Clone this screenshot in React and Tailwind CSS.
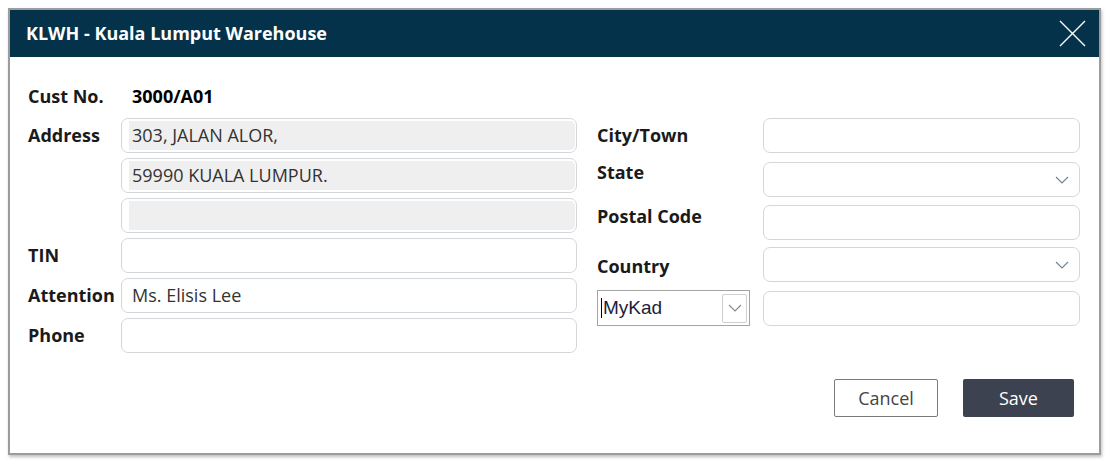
import React from "react";

const font = { fontFamily: '"Open Sans", "Noto Sans", sans-serif' };

function Chevron({ className = "" }) {
  return (
    <svg width="14" height="8" viewBox="0 0 14 8" className={className}>
      <path d="M1 1 L7 7 L13 1" fill="none" stroke="currentColor" strokeWidth="1.1" />
    </svg>
  );
}

function Field({ value = "", filled = false, select = false }) {
  return (
    <div
      className={`h-[35px] w-full rounded-[7px] border border-[#d4d7da] flex items-center bg-white ${
        filled ? "pl-[7px] pr-[1px] py-[2px]" : ""
      }`}
    >
      {filled ? (
        <div className="h-full w-full bg-[#efefef] rounded-r-[5px] flex items-center pl-[3px] text-[18px] text-[#333]">
          {value}
        </div>
      ) : (
        <div className="flex-1 pl-[10px] text-[18px] text-[#333]">{value}</div>
      )}
      {select && <Chevron className="mr-[10px] text-[#70808e]" />}
    </div>
  );
}

function Row({ label, children }) {
  return (
    <div className="flex items-center">
      <div className="w-[93px] shrink-0 text-[18px] font-bold text-[#1a1a1a]">{label}</div>
      <div className="flex-1">{children}</div>
    </div>
  );
}

export default function App() {
  return (
    <div className="w-[1114px] h-[464px] bg-white pt-[8px] pl-[8px]" style={font}>
      <div className="w-[1093px] h-[447px] border-2 border-[#9c9c9c] shadow-[1px_2px_3px_rgba(0,0,0,0.25)] bg-white flex flex-col">
        {/* Header */}
        <div className="h-[47px] bg-[#04324a] flex items-center justify-between pl-[16px] pr-[13px]">
          <span className="text-white text-[18px] font-bold">KLWH - Kuala Lumput Warehouse</span>
          <svg width="27" height="27" viewBox="0 0 27 27">
            <path d="M1 1 L26 26 M26 1 L1 26" stroke="#ffffff" strokeWidth="1.4" />
          </svg>
        </div>

        {/* Body */}
        <div className="flex-1 pt-[27px] pl-[18px] pr-[19px] flex flex-col">
          <div className="flex gap-[20px]">
            {/* Left column */}
            <div className="w-[549px] flex flex-col">
              <div className="h-[24px] flex items-center">
                <div className="w-[104px] text-[18px] font-bold text-[#1a1a1a]">Cust No.</div>
                <div className="text-[18px] font-bold text-black">3000/A01</div>
              </div>
              <div className="mt-[10px] flex flex-col gap-[5px]">
                <div className="flex items-start">
                  <div className="w-[93px] shrink-0 h-[35px] flex items-center text-[18px] font-bold text-[#1a1a1a]">
                    Address
                  </div>
                  <div className="flex-1 flex flex-col gap-[5px]">
                    <Field filled value="303, JALAN ALOR," />
                    <Field filled value="59990 KUALA LUMPUR." />
                    <Field filled value="" />
                  </div>
                </div>
                <Row label="TIN">
                  <Field />
                </Row>
                <Row label="Attention">
                  <Field value="Ms. Elisis Lee" />
                </Row>
                <Row label="Phone">
                  <Field />
                </Row>
              </div>
            </div>

            {/* Right column */}
            <div className="flex-1 pt-[34px] flex flex-col">
              <div className="flex items-center">
                <div className="w-[166px] shrink-0 text-[18px] font-bold text-[#1a1a1a]">City/Town</div>
                <Field />
              </div>
              <div className="flex items-start mt-[9px]">
                <div className="w-[166px] shrink-0 text-[18px] font-bold text-[#1a1a1a] leading-[20px]">State</div>
                <Field select />
              </div>
              <div className="flex items-start mt-[8px]">
                <div className="w-[166px] shrink-0 text-[18px] font-bold text-[#1a1a1a] leading-[22px]">Postal Code</div>
                <Field />
              </div>
              <div className="flex items-center mt-[7px]">
                <div className="w-[166px] shrink-0 text-[18px] font-bold text-[#1a1a1a] pt-[4px]">Country</div>
                <Field select />
              </div>
              <div className="flex items-center mt-[8px]">
                <div className="w-[166px] shrink-0">
                  <div className="w-[153px] h-[36px] border border-[#a3a3a3] flex items-center justify-between pl-[3px] pr-[2px]">
                    <div className="flex items-center">
                      <span className="w-[1px] h-[20px] bg-black mr-[1px]" />
                      <span
                        className="text-[19px] text-[#1c1c3c]"
                        style={{ fontFamily: '"Liberation Sans", Arial, sans-serif' }}
                      >
                        MyKad
                      </span>
                    </div>
                    <div className="w-[25px] h-[29px] border border-[#cfcfcf] rounded-[2px] flex items-center justify-center text-[#808890]">
                      <Chevron />
                    </div>
                  </div>
                </div>
                <Field />
              </div>
            </div>
          </div>

          {/* Buttons */}
          <div className="mt-[26px] flex justify-end gap-[25px] pr-[6px]">
            <button className="w-[104px] h-[38px] border border-[#7a7a7a] rounded-[2px] bg-white text-[18px] text-[#444]">
              Cancel
            </button>
            <button className="w-[111px] h-[38px] rounded-[2px] bg-[#3c4250] text-[18px] text-white">
              Save
            </button>
          </div>
        </div>
      </div>
    </div>
  );
}
